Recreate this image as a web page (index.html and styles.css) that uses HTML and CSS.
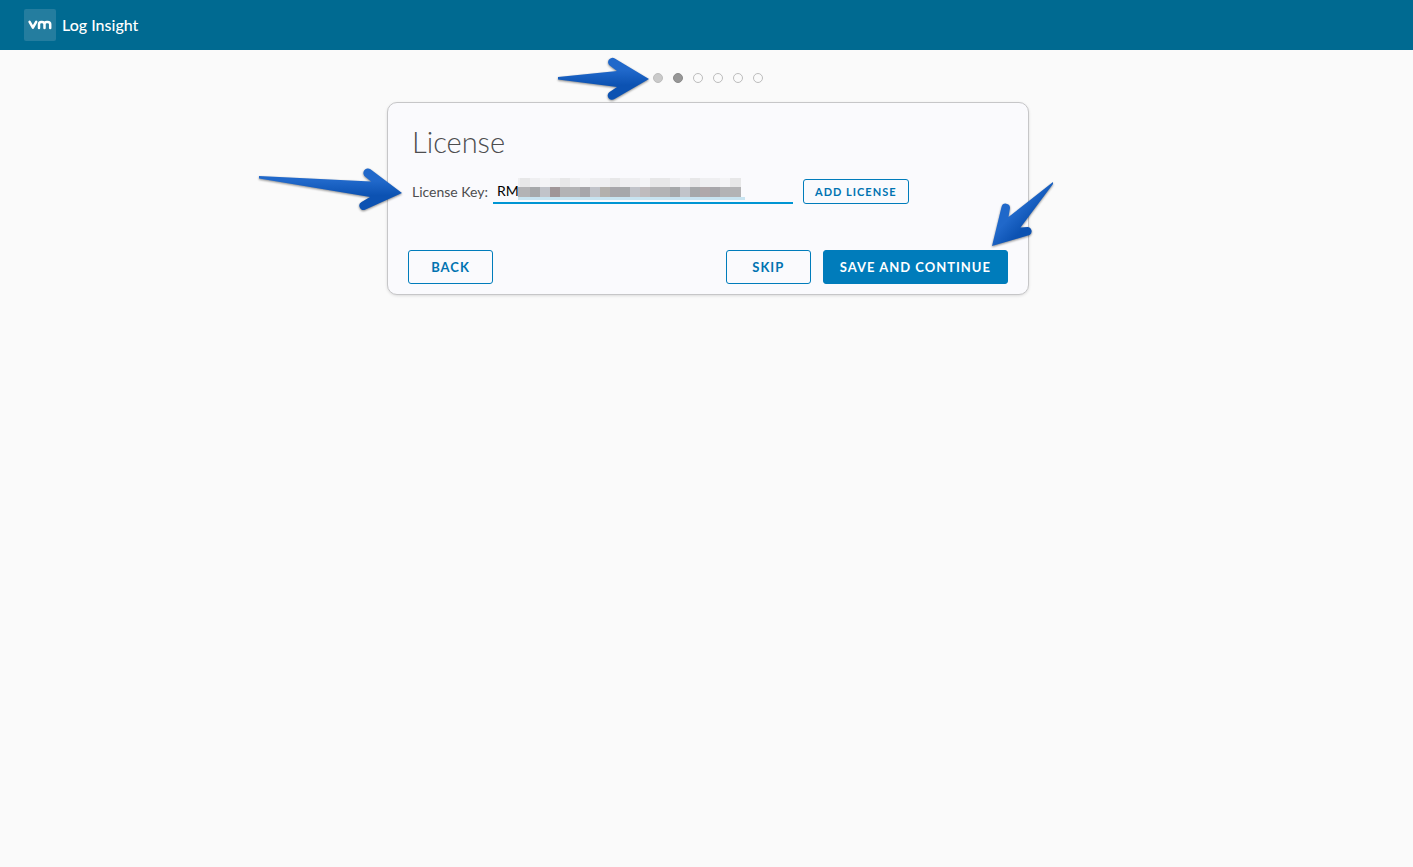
FILE: index.html
```
<!DOCTYPE html>
<html lang="en">
<head>
    <meta charset="UTF-8">
    <meta name="viewport" content="width=device-width, initial-scale=1.0">
    <title>Log Insight - License</title>
    <link rel="stylesheet" href="styles.css">
</head>
<body>
    <header class="header">
        <svg class="logo" viewBox="0 0 32 32" aria-label="vm">
            <rect width="32" height="32" rx="2" fill="#247d9f"/>
            <path d="M5.6 12.9L8.9 18.6L12.2 12.9M15 19V15.2Q15 12.9 17.2 12.9H18Q20.5 12.9 20.5 15.2V19M20.5 15.2Q20.5 12.9 22.8 12.9H23.6Q26.2 12.9 26.2 15.2V19" fill="none" stroke="#fff" stroke-width="2.5" stroke-linecap="round" stroke-linejoin="round"/>
        </svg>
        <span class="product">Log Insight</span>
    </header>

    <main class="wizard">
        <ol class="steps">
            <li class="step done"></li>
            <li class="step current"></li>
            <li class="step"></li>
            <li class="step"></li>
            <li class="step"></li>
            <li class="step"></li>
        </ol>

        <form class="card">
            <h1>License</h1>
            <div class="license-row">
                <label for="license-key">License Key:</label>
                <div class="key-field">
                    <input type="text" id="license-key" value="RM">
                    <!-- masked part of the key -->
                    <svg class="mask" width="228" height="22" viewBox="0 0 228 22" shape-rendering="crispEdges">
                        <rect width="223" height="9" fill="#efeff1"/>
                        <path d="M2 0h10v9h-10zM42 0h10v9h-10zM92 0h10v9h-10zM132 0h20v9h-20zM172 0h10v9h-10zM212 0h11v9h-11z" fill="#e7e7e8"/>
                        <path d="M22 0h10v9h-10zM62 0h10v9h-10zM122 0h10v9h-10zM162 0h10v9h-10zM202 0h10v9h-10z" fill="#f4f4f6"/>
                        <rect y="9" width="223" height="10" fill="#b3b3b5"/>
                        <path d="M12 9h10v10h-10zM102 9h10v10h-10zM152 9h10v10h-10zM172 9h10v10h-10z" fill="#a6a8aa"/>
                        <path d="M22 9h10v10h-10zM72 9h10v10h-10zM112 9h10v10h-10zM162 9h10v10h-10z" fill="#c1c3c9"/>
                        <path d="M62 9h10v10h-10zM92 9h10v10h-10zM192 9h10v10h-10z" fill="#a7a6aa"/>
                        <rect x="32" y="9" width="10" height="10" fill="#a09698"/>
                        <rect x="82" y="9" width="10" height="10" fill="#b3b0ac"/>
                        <rect x="122" y="9" width="10" height="10" fill="#bfbbbd"/>
                        <rect x="182" y="9" width="10" height="10" fill="#b0a8aa"/>
                        <rect y="19" width="227" height="3" fill="#c8e4f1"/>
                    </svg>
                </div>
                <button type="button" class="btn btn-small">Add License</button>
            </div>
            <div class="actions">
                <button type="button" class="btn">Back</button>
                <button type="button" class="btn skip">Skip</button>
                <button type="submit" class="btn btn-primary">Save and Continue</button>
            </div>
        </form>

        <!-- pointers to the step, the key and the save button -->
        <div class="pointers">
            <svg class="pointer to-steps" width="96" height="46" viewBox="0 0 96 46">
                <defs>
                    <linearGradient id="blue" x1="0" y1="0" x2="0" y2="1">
                        <stop offset="0.3" stop-color="#2068ca"/>
                        <stop offset="0.65" stop-color="#0c52b2"/>
                    </linearGradient>
                    <linearGradient id="blue-diagonal" x1="0" y1="0" x2="1" y2="1">
                        <stop offset="0.42" stop-color="#2068ca"/>
                        <stop offset="0.62" stop-color="#0c52b2"/>
                    </linearGradient>
                </defs>
                <path fill="url(#blue)" d="M2 21L61 15L54 9.8A4.3 4.3 0 0 1 58.8 2.6L93 23L58.5 43A4.3 4.3 0 0 1 53.5 36L61 31L2 23.5Z"/>
            </svg>
            <svg class="pointer to-key" width="148" height="46" viewBox="0 0 148 46">
                <path fill="url(#blue)" d="M2 10L114 15.5L108.5 11A4.3 4.3 0 0 1 113.5 3.2L145 27L108.5 43.6A4.3 4.3 0 0 1 104.5 36L113 31L2 12.5Z"/>
            </svg>
            <svg class="pointer to-save" width="66" height="68" viewBox="0 0 66 68">
                <path fill="url(#blue-diagonal)" d="M63 2V4L30.5 47.5L37.5 47A4.3 4.3 0 0 1 39.5 55L2 66L11.5 27A4.3 4.3 0 0 1 20 28L18.5 37Z"/>
            </svg>
        </div>
    </main>
</body>
</html>
```
FILE: styles.css
```
* {
    box-sizing: border-box;
}

body {
    margin: 0;
    min-height: 100vh;
    background: #fafafa;
    color: #4d4d4f;
    font-family: Lato, "Open Sans", sans-serif;
    font-size: 14px;
}

.header {
    display: flex;
    align-items: center;
    gap: 6px;
    height: 50px;
    padding: 0 24px;
    background: #006a91;
    color: #fff;
}

.logo {
    width: 32px;
    height: 32px;
}

.product {
    font-size: 16px;
    font-weight: 500;
    line-height: 20px;
}

.wizard {
    position: relative;
    display: flex;
    flex-direction: column;
    align-items: center;
    padding-left: 3px;
}

.steps {
    display: flex;
    gap: 10px;
    margin: 0;
    padding: 23px 0 19px;
    list-style: none;
}

.step {
    width: 10px;
    height: 10px;
    border: 1px solid #bdbdbd;
    border-radius: 50%;
}

.step.done {
    background: #cacaca;
}

.step.current {
    background: #979797;
    border-color: #8a8a8a;
}

.card {
    width: 100%;
    max-width: 642px;
    padding: 20px 20px 10px;
    background: #fafafd;
    border: 1px solid #c6c6c8;
    border-radius: 10px;
    box-shadow: 0 1px 3px rgba(0, 0, 0, 0.12);
}

h1 {
    margin: 0 4px;
    font-size: 29px;
    font-weight: 300;
    line-height: 38px;
}

.license-row {
    display: flex;
    align-items: center;
    margin: 18px 4px 46px;
}

.key-field {
    position: relative;
    flex: 0 1 300px;
    margin: 0 10px 0 5px;
}

.key-field input {
    display: block;
    width: 100%;
    height: 25px;
    padding: 0 4px;
    border: 0;
    border-bottom: 2px solid #0095d3;
    outline: 0;
    background: transparent;
    color: #000;
    font: inherit;
}

.mask {
    position: absolute;
    top: -1px;
    left: 25px;
}

.actions {
    display: flex;
    gap: 12px;
}

.btn {
    min-width: 85px;
    height: 34px;
    padding: 0 16px;
    background: transparent;
    border: 1px solid #007cbb;
    border-radius: 3px;
    color: #0073b1;
    font-family: inherit;
    font-size: 13px;
    font-weight: 700;
    letter-spacing: 1px;
    text-transform: uppercase;
    white-space: nowrap;
    cursor: pointer;
}

.btn-small {
    height: 25px;
    padding: 0 11px;
    font-size: 11px;
}

.btn-primary {
    background: #007cbb;
    color: #fff;
}

.skip {
    margin-left: auto;
}

/* zero-width column on the card's centre line */
.pointers {
    position: absolute;
    top: 0;
    left: calc(50% + 1px);
}

.pointer {
    position: absolute;
    filter: drop-shadow(0 1px 1px rgba(0, 0, 0, 0.45));
}

.to-steps {
    top: 6px;
    left: -152px;
}

.to-key {
    top: 116px;
    left: -451px;
}

.to-save {
    top: 130px;
    left: 282px;
}
```
